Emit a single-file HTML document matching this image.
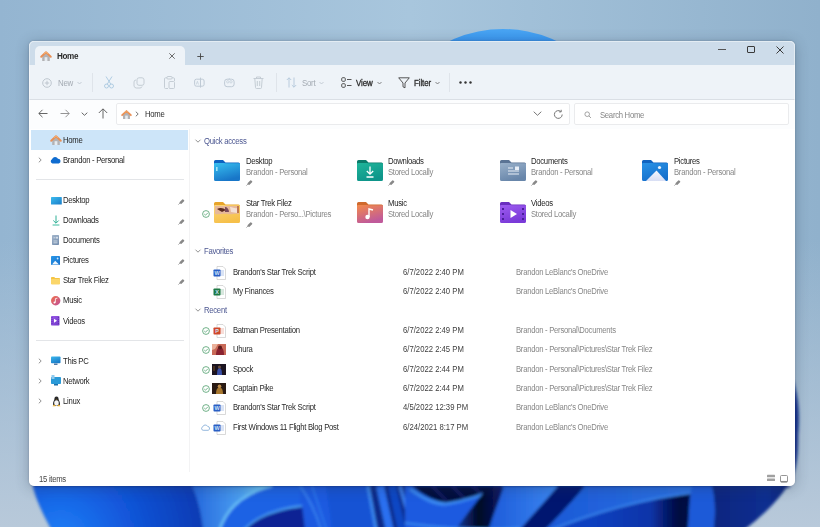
<!DOCTYPE html>
<html><head><meta charset="utf-8">
<style>
*{margin:0;padding:0;box-sizing:border-box}
html,body{width:820px;height:527px;overflow:hidden}
body{position:relative;font-family:"Liberation Sans",sans-serif;background:#97b4cf}
.a{position:absolute}
svg.a{overflow:visible}
.t{position:absolute;font-size:8.4px;letter-spacing:-0.3px;transform:scaleX(0.92);transform-origin:0 0;margin-top:-0.7px;color:#1f1f1f;white-space:nowrap;line-height:10px;height:10px}
.g{color:#878787}
.hd{color:#4b5690}
.d{letter-spacing:0}
.win{position:absolute;left:29px;top:41px;width:766px;height:445px;border-radius:5px;overflow:hidden;background:#fff;box-shadow:0 2px 14px rgba(40,55,75,.32), 0 0 2px rgba(40,50,65,.3)}
</style></head><body>
<!-- background -->
<svg class="a" style="left:0;top:0" width="820" height="527" viewBox="0 0 820 527">
<defs>
<linearGradient id="bg" x1="0" y1="0" x2="1" y2="0">
<stop offset="0" stop-color="#94b5d1"/><stop offset="0.5" stop-color="#a8c6dd"/><stop offset="1" stop-color="#90b1cc"/>
</linearGradient>
<linearGradient id="bgb" x1="0" y1="0" x2="0" y2="1">
<stop offset="0" stop-color="#b8c9da" stop-opacity="0"/><stop offset="1" stop-color="#b8c9da" stop-opacity="1"/>
</linearGradient>
<linearGradient id="arc" x1="0" y1="0" x2="0" y2="1">
<stop offset="0" stop-color="#4aa6f4"/><stop offset="0.08" stop-color="#2f8cee"/><stop offset="1" stop-color="#1a5fd8"/>
</linearGradient>
<linearGradient id="bl" x1="0" y1="0" x2="1" y2="0">
<stop offset="0" stop-color="#1a6ae8"/><stop offset="0.15" stop-color="#1050d0"/><stop offset="0.35" stop-color="#1d66e8"/><stop offset="0.5" stop-color="#0e48c8"/><stop offset="0.75" stop-color="#1554d8"/><stop offset="1" stop-color="#0a2a8a"/>
</linearGradient>
<filter id="bl1" x="-10%" y="-10%" width="120%" height="120%"><feGaussianBlur stdDeviation="1.5"/></filter>
</defs>
<rect width="820" height="527" fill="url(#bg)"/>
<rect y="240" width="820" height="287" fill="url(#bgb)"/>
<circle cx="503" cy="156" r="127" fill="url(#arc)"/>
<g filter="url(#bl1)">
<defs>
<radialGradient id="bA" cx="60" cy="540" r="150" gradientUnits="userSpaceOnUse"><stop offset="0" stop-color="#1f80f8"/><stop offset="0.45" stop-color="#1258dc"/><stop offset="1" stop-color="#0a38b0"/></radialGradient>
<linearGradient id="rib" x1="192" y1="0" x2="262" y2="0" gradientUnits="userSpaceOnUse"><stop offset="0" stop-color="#2466dc"/><stop offset="0.7" stop-color="#4a9ef0"/><stop offset="1" stop-color="#6cc4f6"/></linearGradient>
<linearGradient id="dk1" x1="470" y1="0" x2="560" y2="0" gradientUnits="userSpaceOnUse"><stop offset="0" stop-color="#0c3ab0"/><stop offset="0.5" stop-color="#020626"/><stop offset="1" stop-color="#061a80"/></linearGradient>
<linearGradient id="dk2" x1="590" y1="0" x2="700" y2="0" gradientUnits="userSpaceOnUse"><stop offset="0" stop-color="#0c40c0"/><stop offset="0.55" stop-color="#0a34a8"/><stop offset="0.8" stop-color="#020840"/><stop offset="1" stop-color="#030a48"/></linearGradient>
<linearGradient id="nv" x1="715" y1="0" x2="800" y2="0" gradientUnits="userSpaceOnUse"><stop offset="0" stop-color="#0a2680"/><stop offset="0.6" stop-color="#0c2e90"/><stop offset="1" stop-color="#0a2270"/></linearGradient>
</defs>
<path d="M33 440 L33 486 C36 500 44 516 57 540 L730 540 C752 525 775 505 789 483 C796 472 798 460 798 435 C800 412 798 396 793 380 L40 380 Z" fill="#0a2a8a"/>
<path d="M33 486 C36 500 44 516 57 540 L204 540 C202 515 198 500 192 486 Z" fill="url(#bA)"/>
<path d="M192 486 C198 500 202 515 204 540 L300 540 L300 486 Z" fill="url(#rib)"/>
<path d="M272 486 C240 494 222 512 217 540 L330 540 L330 486 Z" fill="#1e62e4"/>
<path d="M272 486 C240 494 222 512 217 540" fill="none" stroke="#6cc4f8" stroke-width="2.2"/>
<path d="M300 486 L326 486 L338 540 L300 540 Z" fill="#1a5ae0"/>
<path d="M238 540 C245 522 268 510 302 506 C304 520 305 530 306 540 Z" fill="#0a2494"/>
<path d="M238 540 C245 522 268 510 302 506" fill="none" stroke="#4aa0f4" stroke-width="1.8"/>
<path d="M300 486 C310 500 318 515 324 540" fill="none" stroke="#3a86f0" stroke-width="1.6"/>
<path d="M312 486 L330 540" stroke="#2f7cee" stroke-width="1.4"/>
<path d="M326 486 L368 486 L378 540 L334 540 Z" fill="#1452d4"/>
<path d="M368 486 L378 540" stroke="#3a88f0" stroke-width="3"/>
<path d="M380 486 L392 540" stroke="#2a70f0" stroke-width="8"/>
<path d="M392 486 L404 540" stroke="#1146c4" stroke-width="8"/>
<path d="M400 486 C405 505 410 520 415 540" stroke="#3a80f0" stroke-width="3" fill="none"/>
<path d="M406 486 L420 486 L420 540 L414 540 Z" fill="#1a5ae0"/>
<path d="M405 486 L700 486 L700 540 L405 540 Z" fill="#1a5ae0"/>
<path d="M412 486 L502 486 C485 494 462 502 445 503 C432 500 420 493 412 486 Z" fill="#030a3c"/>
<path d="M432 486 L447 501 M452 486 L466 500 M472 486 L484 496" stroke="#1a2a80" stroke-width="2" opacity="0.7"/>
<path d="M410 489 C424 499 434 504 446 504 C466 501 486 494 504 486" fill="none" stroke="#3a8af2" stroke-width="3"/>
<defs><linearGradient id="fold" x1="0" y1="0" x2="1" y2="0"><stop offset="0" stop-color="#1a50d0"/><stop offset="0.55" stop-color="#020622"/><stop offset="1" stop-color="#0a1a70"/></linearGradient>
<linearGradient id="pet" x1="540" y1="0" x2="700" y2="0" gradientUnits="userSpaceOnUse"><stop offset="0" stop-color="#1a58d6"/><stop offset="1" stop-color="#2c72e2"/></linearGradient><linearGradient id="lb" x1="0" y1="0" x2="1" y2="0"><stop offset="0" stop-color="#1c58d8"/><stop offset="1" stop-color="#3a86f0"/></linearGradient></defs>
<path d="M448 540 C462 520 478 500 488 486 L504 486 C500 500 490 522 486 540 Z" fill="url(#fold)"/>
<path d="M486 540 C490 522 500 500 504 486 L558 486 C545 502 525 522 512 540 Z" fill="url(#lb)"/>
<path d="M405 523 C440 528 480 531 520 528" fill="none" stroke="#3a8af0" stroke-width="2"/>
<path d="M558 486 L585 486 C570 505 550 525 535 540 L512 540 C525 522 545 502 558 486 Z" fill="#061470"/>
<path d="M585 486 L700 486 L700 492 C650 497 590 512 530 540 L535 540 C550 525 570 505 585 486 Z" fill="url(#pet)"/>
<path d="M528 540 C590 512 650 497 700 492 L700 540 Z" fill="url(#dk2)"/>
<path d="M532 538 C590 512 650 497 700 492" fill="none" stroke="#3a86ee" stroke-width="1.8"/>
<path d="M686 540 C690 520 688 500 692 486 L712 486 C716 500 716 520 712 540 Z" fill="#1c5ad8"/>
<path d="M684 486 C688 492 690 495 692 486 Z" fill="#2a70e0"/>
<path d="M712 486 L791 486 C789 488 787 488 786 488 C775 505 752 525 730 540 L712 540 C716 520 716 500 712 486 Z" fill="url(#nv)"/>

</g>
<!-- window shadow halo -->
</svg>

<div class="win">
 <!-- title bar -->
 <div class="a" style="left:0;top:0;width:766px;height:24px;background:#cddcea"></div>
 <div class="a" style="left:6px;top:5px;width:150px;height:19px;background:#eef3f8;border-radius:5px 5px 0 0"></div>
 <!-- toolbar -->
 <div class="a" style="left:0;top:24px;width:766px;height:35px;background:#eef3f8;border-bottom:1px solid #dadfe5"></div>
 <!-- address row -->
 <div class="a" style="left:0;top:59px;width:766px;height:29px;background:#fcfdfe"></div>
 <div class="a" style="left:87px;top:62px;width:454px;height:22px;background:#fff;border:1px solid #eaebed;border-radius:2px"></div>
 <div class="a" style="left:545px;top:62px;width:215px;height:22px;background:#fff;border:1px solid #eaebed;border-radius:2px"></div>
 <!-- sidebar -->
 <div class="a" style="left:160px;top:88px;width:1px;height:343px;background:#f3f3f4"></div>
 <div class="a" style="left:2px;top:89px;width:157px;height:20px;background:#cde5f9"></div>
 <div class="a" style="left:7px;top:138px;width:148px;height:1px;background:#e3e5e8"></div>
 <div class="a" style="left:7px;top:299px;width:148px;height:1px;background:#e3e5e8"></div>
</div>

<div class="a" style="left:29px;top:41px;width:766px;height:445px;border-radius:5px;border:1px solid rgba(255,255,255,0.45)"></div>
<!-- ===== title bar content ===== -->
<svg class="a" style="left:40px;top:50px" width="12" height="12" viewBox="0 0 12 12">
 <path d="M2.2 6.2 L6 2.8 L9.8 6.2 V11 H2.2 Z" fill="#b2b2b5"/><rect x="4.6" y="7.2" width="2.8" height="3.8" fill="#e6ebf0"/>
 <path d="M1.2 6.8 L6 2.2 L10.8 6.8" fill="none" stroke="#e98f55" stroke-width="1.9" stroke-linejoin="round" stroke-linecap="round"/><path d="M4 3.8 L6 2.2 L8 3.8" fill="none" stroke="#f4b070" stroke-width="1"/>
</svg>
<div class="t" style="left:56.5px;top:51.8px;font-weight:bold;color:#2a2a2a;font-size:8.8px;letter-spacing:-0.4px">Home</div>
<svg class="a" style="left:169px;top:53px" width="6" height="6" viewBox="0 0 6 6"><path d="M0.3 0.3 L5.7 5.7 M5.7 0.3 L0.3 5.7" stroke="#555" stroke-width="0.85"/></svg>
<svg class="a" style="left:197px;top:52.7px" width="7" height="7" viewBox="0 0 7 7"><path d="M3.5 0.3 V6.7 M0.3 3.5 H6.7" stroke="#444" stroke-width="0.9"/></svg>
<div class="a" style="left:718px;top:49px;width:8px;height:1px;background:#555"></div>
<div class="a" style="left:747px;top:46px;width:8px;height:7px;border:1px solid #3a3a3a;border-radius:1px"></div>
<svg class="a" style="left:776px;top:46px" width="8" height="8" viewBox="0 0 8 8"><path d="M0.5 0.5 L7.5 7.5 M7.5 0.5 L0.5 7.5" stroke="#3a3a3a" stroke-width="1"/></svg>

<!-- ===== toolbar ===== -->
<svg class="a" style="left:42px;top:78px" width="10" height="10" viewBox="0 0 10 10"><circle cx="5" cy="5" r="4.3" fill="none" stroke="#b9c2cb" stroke-width="0.9"/><path d="M5 2.8 V7.2 M2.8 5 H7.2" stroke="#b9c2cb" stroke-width="0.9"/></svg>
<div class="t" style="left:58px;top:78.5px;color:#a4abb3;font-size:8.6px">New</div>
<svg class="a" style="left:77px;top:81px" width="5" height="4" viewBox="0 0 5 4"><path d="M0.5 1 L2.5 3 L4.5 1" fill="none" stroke="#b9c2cb" stroke-width="0.8"/></svg>
<div class="a" style="left:92px;top:73px;width:1px;height:19px;background:#dfe4ea"></div>
<!-- cut -->
<svg class="a" style="left:103px;top:76px" width="12" height="13" viewBox="0 0 12 13"><path d="M3 0.5 L8 8.5 M9 0.5 L4 8.5" stroke="#a9c8e0" stroke-width="0.9" fill="none"/><circle cx="3.5" cy="10" r="2" fill="none" stroke="#a9c8e0" stroke-width="0.9"/><circle cx="8.5" cy="10" r="2" fill="none" stroke="#a9c8e0" stroke-width="0.9"/></svg>
<!-- copy -->
<svg class="a" style="left:133px;top:77px" width="12" height="12" viewBox="0 0 12 12"><rect x="4" y="0.8" width="7" height="7.5" rx="2" fill="none" stroke="#c0c8d0" stroke-width="0.9"/><path d="M3 3 A2 2 0 0 0 1 5 V9 A2.5 2.5 0 0 0 3.5 11 H7 A2 2 0 0 0 9 9.5" fill="none" stroke="#c0c8d0" stroke-width="0.9"/></svg>
<!-- paste -->
<svg class="a" style="left:164px;top:76px" width="11" height="13" viewBox="0 0 11 13"><path d="M3 1.8 H1.5 A1 1 0 0 0 0.5 2.8 V11.5 A1 1 0 0 0 1.5 12.5 H4 M8 1.8 H9.5 A1 1 0 0 1 10.5 2.8 V5" fill="none" stroke="#c0c8d0" stroke-width="0.9"/><rect x="3" y="0.5" width="5" height="2.5" rx="0.8" fill="none" stroke="#c0c8d0" stroke-width="0.9"/><rect x="5" y="5.5" width="5.5" height="7" rx="1" fill="none" stroke="#c0c8d0" stroke-width="0.9"/></svg>
<!-- rename -->
<svg class="a" style="left:194px;top:77px" width="11" height="11" viewBox="0 0 11 11"><rect x="0.6" y="2.2" width="9.5" height="7" rx="1.8" fill="none" stroke="#bfcad5" stroke-width="1"/><path d="M6.5 0.6 V10.6" stroke="#bfcad5" stroke-width="1"/><path d="M2.3 7.5 L3.4 4.3 L4.5 7.5" stroke="#c5d0da" stroke-width="0.8" fill="none"/></svg>
<!-- share -->
<svg class="a" style="left:224px;top:77px" width="11" height="11" viewBox="0 0 11 11"><rect x="0.6" y="2.2" width="9.5" height="7.5" rx="2.5" fill="none" stroke="#bfcad5" stroke-width="1"/><circle cx="3.8" cy="4.8" r="1.2" fill="none" stroke="#c5d0da" stroke-width="0.8"/><circle cx="7" cy="4.8" r="1.2" fill="none" stroke="#c5d0da" stroke-width="0.8"/><path d="M5.3 1 V3" stroke="#c5d0da" stroke-width="0.8"/></svg>
<!-- delete -->
<svg class="a" style="left:253px;top:76px" width="11" height="13" viewBox="0 0 11 13"><path d="M0.5 2.5 H10.5 M3.5 2.5 V1 H7.5 V2.5 M1.8 2.5 L2.5 11.5 A1 1 0 0 0 3.5 12.5 H7.5 A1 1 0 0 0 8.5 11.5 L9.2 2.5 M4.3 5 V10 M6.7 5 V10" fill="none" stroke="#c0c8d0" stroke-width="0.9"/></svg>
<div class="a" style="left:276px;top:73px;width:1px;height:19px;background:#dfe4ea"></div>
<!-- sort -->
<svg class="a" style="left:286px;top:77px" width="11" height="11" viewBox="0 0 11 11"><path d="M3 10.5 V0.8 M0.8 3 L3 0.8 L5.2 3 M8 0.5 V10.2 M5.8 8 L8 10.2 L10.2 8" fill="none" stroke="#b2c7da" stroke-width="0.9"/></svg>
<div class="t" style="left:302px;top:78.5px;color:#a4abb3;font-size:8.6px">Sort</div>
<svg class="a" style="left:319px;top:81px" width="5" height="4" viewBox="0 0 5 4"><path d="M0.5 1 L2.5 3 L4.5 1" fill="none" stroke="#b9c2cb" stroke-width="0.8"/></svg>
<!-- view -->
<svg class="a" style="left:341px;top:77px" width="11" height="11" viewBox="0 0 11 11"><rect x="0.7" y="0.7" width="3.6" height="3.6" rx="1" fill="none" stroke="#444" stroke-width="0.9"/><rect x="0.7" y="6.7" width="3.6" height="3.6" rx="1" fill="none" stroke="#444" stroke-width="0.9"/><path d="M6 2.5 H10.5 M6 8.5 H10.5" stroke="#444" stroke-width="0.9"/></svg>
<div class="t" style="left:356px;top:78.5px;color:#2b2b2b;font-size:8.6px;-webkit-text-stroke:0.3px #2b2b2b;letter-spacing:-0.1px">View</div>
<svg class="a" style="left:377px;top:81px" width="5" height="4" viewBox="0 0 5 4"><path d="M0.5 1 L2.5 3 L4.5 1" fill="none" stroke="#666" stroke-width="0.8"/></svg>
<!-- filter -->
<svg class="a" style="left:398px;top:77px" width="12" height="12" viewBox="0 0 12 12"><path d="M0.7 0.8 H11.3 L7 6 V10.8 L5 9.8 V6 Z" fill="none" stroke="#444" stroke-width="0.9" stroke-linejoin="round"/></svg>
<div class="t" style="left:414px;top:78.5px;color:#2b2b2b;font-size:8.6px;-webkit-text-stroke:0.3px #2b2b2b;letter-spacing:-0.1px">Filter</div>
<svg class="a" style="left:435px;top:81px" width="5" height="4" viewBox="0 0 5 4"><path d="M0.5 1 L2.5 3 L4.5 1" fill="none" stroke="#666" stroke-width="0.8"/></svg>
<div class="a" style="left:449px;top:73px;width:1px;height:19px;background:#dfe4ea"></div>
<svg class="a" style="left:459px;top:81px" width="13" height="3" viewBox="0 0 13 3"><circle cx="1.5" cy="1.5" r="1.2" fill="#333"/><circle cx="6.5" cy="1.5" r="1.2" fill="#333"/><circle cx="11.5" cy="1.5" r="1.2" fill="#333"/></svg>

<!-- ===== address row ===== -->
<svg class="a" style="left:38px;top:109px" width="10" height="9" viewBox="0 0 10 9"><path d="M9.5 4.5 H1 M4.5 0.8 L0.8 4.5 L4.5 8.2" fill="none" stroke="#555" stroke-width="0.9"/></svg>
<svg class="a" style="left:60px;top:109px" width="10" height="9" viewBox="0 0 10 9"><path d="M0.5 4.5 H9 M5.5 0.8 L9.2 4.5 L5.5 8.2" fill="none" stroke="#888" stroke-width="0.9"/></svg>
<svg class="a" style="left:81px;top:112px" width="7" height="4" viewBox="0 0 7 4"><path d="M0.7 0.7 L3.5 3.3 L6.3 0.7" fill="none" stroke="#555" stroke-width="0.9"/></svg>
<svg class="a" style="left:98px;top:108px" width="10" height="11" viewBox="0 0 10 11"><path d="M5 10.5 V1 M0.8 5 L5 0.8 L9.2 5" fill="none" stroke="#555" stroke-width="0.9"/></svg>
<svg class="a" style="left:120.5px;top:108.5px" width="11" height="11" viewBox="0 0 12 12">
 <path d="M2.2 6.2 L6 2.8 L9.8 6.2 V11 H2.2 Z" fill="#b2b2b5"/><rect x="4.6" y="7.2" width="2.8" height="3.8" fill="#e6ebf0"/>
 <path d="M1.2 6.8 L6 2.2 L10.8 6.8" fill="none" stroke="#e98f55" stroke-width="1.9" stroke-linejoin="round" stroke-linecap="round"/><path d="M4 3.8 L6 2.2 L8 3.8" fill="none" stroke="#f4b070" stroke-width="1"/>
</svg>
<svg class="a" style="left:135px;top:111px" width="4" height="6" viewBox="0 0 4 6"><path d="M0.8 0.7 L3.2 3 L0.8 5.3" fill="none" stroke="#555" stroke-width="0.8"/></svg>
<div class="t" style="left:145px;top:110px;color:#2b2b2b">Home</div>
<svg class="a" style="left:533px;top:111px" width="9" height="5" viewBox="0 0 9 5"><path d="M0.7 0.7 L4.5 4.3 L8.3 0.7" fill="none" stroke="#666" stroke-width="0.9"/></svg>
<svg class="a" style="left:553px;top:108.5px" width="11" height="11" viewBox="0 0 11 11"><path d="M9.2 5.5 A3.9 3.9 0 1 1 7.8 2.5" fill="none" stroke="#777" stroke-width="1"/><path d="M8.2 0.8 V2.9 H6.1" fill="none" stroke="#777" stroke-width="1"/></svg>
<svg class="a" style="left:584px;top:110.5px" width="8" height="8" viewBox="0 0 8 8"><circle cx="3.2" cy="3.2" r="2.3" fill="none" stroke="#999" stroke-width="0.9"/><path d="M4.9 4.9 L7 7" stroke="#999" stroke-width="0.9"/></svg>
<div class="t" style="left:600px;top:110.6px;color:#858585">Search Home</div>

<!-- ===== sidebar ===== -->
<svg class="a" style="left:50px;top:134px" width="12" height="12" viewBox="0 0 12 12">
 <path d="M2.2 6.2 L6 2.8 L9.8 6.2 V11 H2.2 Z" fill="#b2b2b5"/><rect x="4.6" y="7.2" width="2.8" height="3.8" fill="#e6ebf0"/>
 <path d="M1.2 6.8 L6 2.2 L10.8 6.8" fill="none" stroke="#e98f55" stroke-width="1.9" stroke-linejoin="round" stroke-linecap="round"/><path d="M4 3.8 L6 2.2 L8 3.8" fill="none" stroke="#f4b070" stroke-width="1"/>
</svg>
<div class="t" style="left:63px;top:136px">Home</div>
<svg class="a" style="left:38px;top:157px" width="4" height="6" viewBox="0 0 4 6"><path d="M0.8 0.7 L3.2 3 L0.8 5.3" fill="none" stroke="#777" stroke-width="0.8"/></svg>
<svg class="a" style="left:50px;top:156px" width="11" height="8" viewBox="0 0 11 8"><path d="M2.5 7.5 A2.3 2.3 0 0 1 2 3.2 A3.2 3.2 0 0 1 8 2.8 A2.4 2.4 0 0 1 8.8 7.5 Z" fill="#0f6cd0"/></svg>
<div class="t" style="left:63px;top:156px">Brandon - Personal</div>

<svg class="a" style="left:50.5px;top:196.5px" width="11" height="8" viewBox="0 0 11 8"><defs><linearGradient id="sd" x1="0" y1="0" x2="1" y2="1"><stop offset="0" stop-color="#3cbcef"/><stop offset="1" stop-color="#1a7cc8"/></linearGradient></defs><rect x="0" y="0" width="10.8" height="7.6" rx="0.6" fill="url(#sd)"/></svg>
<div class="t" style="left:63px;top:196px">Desktop</div>
<svg class="a" style="left:52px;top:215px" width="8" height="11" viewBox="0 0 8 11"><path d="M4 0.5 V8 M1.3 5.5 L4 8.2 L6.7 5.5" fill="none" stroke="#2fb096" stroke-width="1"/><path d="M0.6 10 H7.4" stroke="#3cbca0" stroke-width="1"/></svg>
<div class="t" style="left:63px;top:216px">Downloads</div>
<svg class="a" style="left:52px;top:235.3px" width="7" height="10" viewBox="0 0 7 10"><defs><linearGradient id="sdoc" x1="0" y1="0" x2="0.6" y2="1"><stop offset="0" stop-color="#a3b6cc"/><stop offset="1" stop-color="#7891b0"/></linearGradient></defs><rect width="7" height="10" rx="0.7" fill="url(#sdoc)"/><path d="M1.5 2.8 H3.5 M1.5 6 H5.5 M1.5 7.8 H5.5" stroke="#dbe4ee" stroke-width="0.8"/><rect x="4.2" y="1.8" width="1.6" height="1.8" fill="#e4ebf3"/></svg>
<div class="t" style="left:63px;top:236px">Documents</div>
<svg class="a" style="left:51.2px;top:256.2px" width="9" height="9" viewBox="0 0 9 9"><defs><linearGradient id="spic" x1="0" y1="0" x2="1" y2="1"><stop offset="0" stop-color="#2a98e8"/><stop offset="1" stop-color="#1670cc"/></linearGradient></defs><rect width="9" height="9" rx="0.8" fill="url(#spic)"/><path d="M1 8.6 L4.2 4.8 L8 8.6 Z" fill="#eef6fd"/><circle cx="6.6" cy="2.5" r="0.9" fill="#cfe8fa"/></svg>
<div class="t" style="left:63px;top:256px">Pictures</div>
<svg class="a" style="left:51.2px;top:276.8px" width="9" height="7.2" viewBox="0 0 9 7.2"><path d="M0 0.8 A0.8 0.8 0 0 1 0.8 0 H3.3 L4.1 1 H8.2 A0.8 0.8 0 0 1 9 1.8 V6.4 A0.8 0.8 0 0 1 8.2 7.2 H0.8 A0.8 0.8 0 0 1 0 6.4 Z" fill="#f5c443"/><rect x="0" y="2" width="9" height="5.2" rx="0.7" fill="#fbd66a"/></svg>
<div class="t" style="left:63px;top:276px">Star Trek Filez</div>
<svg class="a" style="left:51px;top:296px" width="9.4" height="9.4" viewBox="0 0 9.4 9.4"><defs><linearGradient id="sm" x1="0" y1="0" x2="1" y2="1"><stop offset="0" stop-color="#f0704a"/><stop offset="1" stop-color="#c0509a"/></linearGradient></defs><circle cx="4.7" cy="4.7" r="4.7" fill="url(#sm)"/><path d="M4.4 6.6 V2.6 L6.4 2.2" fill="none" stroke="#fff" stroke-width="0.8"/><circle cx="3.5" cy="6.6" r="1" fill="#fff"/></svg>
<div class="t" style="left:63px;top:296px">Music</div>
<svg class="a" style="left:51.4px;top:315.6px" width="8.5" height="9.6" viewBox="0 0 8.5 9.6"><defs><linearGradient id="svid" x1="0" y1="0" x2="1" y2="1"><stop offset="0" stop-color="#9a5ae8"/><stop offset="1" stop-color="#7038c8"/></linearGradient></defs><rect width="8.5" height="9.6" rx="0.8" fill="url(#svid)"/><path d="M3 2.8 L6 4.8 L3 6.8 Z" fill="#fff"/><path d="M1 1 V8.6 M7.5 1 V8.6" stroke="#5a2aa8" stroke-width="0.8" stroke-dasharray="1 1"/></svg>
<div class="t" style="left:63px;top:317px">Videos</div>

<svg class="a" style="left:38px;top:358px" width="4" height="6" viewBox="0 0 4 6"><path d="M0.8 0.7 L3.2 3 L0.8 5.3" fill="none" stroke="#777" stroke-width="0.8"/></svg>
<svg class="a" style="left:51px;top:356px" width="10" height="10" viewBox="0 0 10 10"><defs><linearGradient id="spc" x1="0" y1="0" x2="0.5" y2="1"><stop offset="0" stop-color="#3cb8ee"/><stop offset="1" stop-color="#1a7cc8"/></linearGradient></defs><rect y="0.5" width="9.5" height="6.8" rx="0.8" fill="url(#spc)"/><rect x="3" y="7.6" width="3.5" height="1.2" fill="#2a5a90"/></svg>
<div class="t" style="left:63px;top:357px">This PC</div>
<svg class="a" style="left:38px;top:378px" width="4" height="6" viewBox="0 0 4 6"><path d="M0.8 0.7 L3.2 3 L0.8 5.3" fill="none" stroke="#777" stroke-width="0.8"/></svg>
<svg class="a" style="left:51px;top:375px" width="10" height="11" viewBox="0 0 10 11"><rect x="0" y="2" width="10" height="7" rx="0.8" fill="#2a9ad8"/><rect x="0.5" y="0" width="3" height="4" fill="#8fcaee"/><rect x="3" y="9" width="4" height="1.5" fill="#1c6fa8"/></svg>
<div class="t" style="left:63px;top:377px">Network</div>
<svg class="a" style="left:38px;top:398px" width="4" height="6" viewBox="0 0 4 6"><path d="M0.8 0.7 L3.2 3 L0.8 5.3" fill="none" stroke="#777" stroke-width="0.8"/></svg>
<svg class="a" style="left:51.5px;top:395.5px" width="9" height="10.5" viewBox="0 0 10 12"><path d="M5 0.5 C3.2 0.5 2.6 2 2.6 3.5 C2.6 5 1 6.5 1 9 C1 10.5 2.5 11.5 5 11.5 C7.5 11.5 9 10.5 9 9 C9 6.5 7.4 5 7.4 3.5 C7.4 2 6.8 0.5 5 0.5 Z" fill="#2a2a2a"/><ellipse cx="5" cy="8" rx="2.6" ry="3.2" fill="#f6f6f6"/><path d="M0.3 11.6 L2.8 9.8 L4 11.8 Z M9.7 11.6 L7.2 9.8 L6 11.8 Z" fill="#f0b020"/><path d="M4.2 3.6 L5 4.4 L5.8 3.6 Z" fill="#f0b020"/></svg>
<div class="t" style="left:63px;top:397px">Linux</div>
<!-- pins -->
<svg class="a" style="left:178px;top:197.7px" width="7" height="7" viewBox="0 0 7 7"><path d="M0.4 6.6 L2.4 4.6" stroke="#909090" stroke-width="0.8"/><rect x="1.4" y="2.3" width="5" height="2.6" rx="0.7" fill="#888" transform="rotate(-45 3.9 3.6)"/></svg>
<svg class="a" style="left:178px;top:217.7px" width="7" height="7" viewBox="0 0 7 7"><path d="M0.4 6.6 L2.4 4.6" stroke="#909090" stroke-width="0.8"/><rect x="1.4" y="2.3" width="5" height="2.6" rx="0.7" fill="#888" transform="rotate(-45 3.9 3.6)"/></svg>
<svg class="a" style="left:178px;top:237.7px" width="7" height="7" viewBox="0 0 7 7"><path d="M0.4 6.6 L2.4 4.6" stroke="#909090" stroke-width="0.8"/><rect x="1.4" y="2.3" width="5" height="2.6" rx="0.7" fill="#888" transform="rotate(-45 3.9 3.6)"/></svg>
<svg class="a" style="left:178px;top:257.7px" width="7" height="7" viewBox="0 0 7 7"><path d="M0.4 6.6 L2.4 4.6" stroke="#909090" stroke-width="0.8"/><rect x="1.4" y="2.3" width="5" height="2.6" rx="0.7" fill="#888" transform="rotate(-45 3.9 3.6)"/></svg>
<svg class="a" style="left:178px;top:277.7px" width="7" height="7" viewBox="0 0 7 7"><path d="M0.4 6.6 L2.4 4.6" stroke="#909090" stroke-width="0.8"/><rect x="1.4" y="2.3" width="5" height="2.6" rx="0.7" fill="#888" transform="rotate(-45 3.9 3.6)"/></svg>

<!-- ===== content ===== -->
<svg class="a" style="left:195px;top:139px" width="6" height="4" viewBox="0 0 6 4"><path d="M0.5 0.7 L3 3.2 L5.5 0.7" fill="none" stroke="#777" stroke-width="0.8"/></svg>
<div class="t hd" style="left:204px;top:136.8px">Quick access</div>
<svg class="a" style="left:195px;top:249px" width="6" height="4" viewBox="0 0 6 4"><path d="M0.5 0.7 L3 3.2 L5.5 0.7" fill="none" stroke="#777" stroke-width="0.8"/></svg>
<div class="t hd" style="left:204px;top:246.5px">Favorites</div>
<svg class="a" style="left:195px;top:308px" width="6" height="4" viewBox="0 0 6 4"><path d="M0.5 0.7 L3 3.2 L5.5 0.7" fill="none" stroke="#777" stroke-width="0.8"/></svg>
<div class="t hd" style="left:204px;top:305.5px">Recent</div>
<svg class="a" style="left:214px;top:160px" width="26" height="21" viewBox="0 0 26 21"><defs><linearGradient id="fq1" x1="0" y1="0" x2="0.4" y2="1"><stop offset="0" stop-color="#38c0f0"/><stop offset="1" stop-color="#1876c8"/></linearGradient></defs><path d="M0 1.5 A1.5 1.5 0 0 1 1.5 0 H9 L11.5 2.5 H24.5 A1.5 1.5 0 0 1 26 4 V10 H0 Z" fill="#0d62c0"/><path d="M0 4 A1 1 0 0 1 1 3 H10 L11.5 3.2 H25 A1 1 0 0 1 26 4.2 V19.5 A1.5 1.5 0 0 1 24.5 21 H1.5 A1.5 1.5 0 0 1 0 19.5 Z" fill="url(#fq1)"/><rect x="2" y="7" width="1.6" height="4" fill="#9fe4f8"/></svg>
<svg class="a" style="left:357px;top:160px" width="26" height="21" viewBox="0 0 26 21"><defs><linearGradient id="fq2" x1="0" y1="0" x2="0.4" y2="1"><stop offset="0" stop-color="#1fb59a"/><stop offset="1" stop-color="#0e958a"/></linearGradient></defs><path d="M0 1.5 A1.5 1.5 0 0 1 1.5 0 H9 L11.5 2.5 H24.5 A1.5 1.5 0 0 1 26 4 V10 H0 Z" fill="#0b7a6a"/><path d="M0 4 A1 1 0 0 1 1 3 H10 L11.5 3.2 H25 A1 1 0 0 1 26 4.2 V19.5 A1.5 1.5 0 0 1 24.5 21 H1.5 A1.5 1.5 0 0 1 0 19.5 Z" fill="url(#fq2)"/><path d="M13 6.5 V14 M9.8 11 L13 14.2 L16.2 11 M9.5 17 H16.5" fill="none" stroke="#fff" stroke-width="1.3"/></svg>
<svg class="a" style="left:500px;top:160px" width="26" height="21" viewBox="0 0 26 21"><defs><linearGradient id="fq3" x1="0" y1="0" x2="0.4" y2="1"><stop offset="0" stop-color="#9ab1ca"/><stop offset="1" stop-color="#6886aa"/></linearGradient></defs><path d="M0 1.5 A1.5 1.5 0 0 1 1.5 0 H9 L11.5 2.5 H24.5 A1.5 1.5 0 0 1 26 4 V10 H0 Z" fill="#5a7394"/><path d="M0 4 A1 1 0 0 1 1 3 H10 L11.5 3.2 H25 A1 1 0 0 1 26 4.2 V19.5 A1.5 1.5 0 0 1 24.5 21 H1.5 A1.5 1.5 0 0 1 0 19.5 Z" fill="url(#fq3)"/><path d="M8 8 H13 M8 11 H19 M8 14 H19" stroke="#e8eef6" stroke-width="1.2"/><rect x="15" y="6.5" width="4" height="3.5" fill="#e8eef6"/></svg>
<svg class="a" style="left:642px;top:160px" width="26" height="21" viewBox="0 0 26 21"><defs><linearGradient id="fq4" x1="0" y1="0" x2="0.4" y2="1"><stop offset="0" stop-color="#2892e6"/><stop offset="1" stop-color="#1670cc"/></linearGradient></defs><path d="M0 1.5 A1.5 1.5 0 0 1 1.5 0 H9 L11.5 2.5 H24.5 A1.5 1.5 0 0 1 26 4 V10 H0 Z" fill="#0f63c0"/><path d="M0 4 A1 1 0 0 1 1 3 H10 L11.5 3.2 H25 A1 1 0 0 1 26 4.2 V19.5 A1.5 1.5 0 0 1 24.5 21 H1.5 A1.5 1.5 0 0 1 0 19.5 Z" fill="url(#fq4)"/><defs><linearGradient id="mtn" x1="0" y1="0" x2="0" y2="1"><stop offset="0" stop-color="#f4f8fe"/><stop offset="1" stop-color="#d8def4"/></linearGradient></defs><path d="M4 21 L14.5 10.5 L24 21 Z" fill="url(#mtn)"/><circle cx="17.5" cy="7.5" r="1.6" fill="#eaf3fc"/></svg>
<svg class="a" style="left:214px;top:202px" width="26" height="21" viewBox="0 0 26 21"><defs><linearGradient id="fq5" x1="0" y1="0" x2="0.4" y2="1"><stop offset="0" stop-color="#fbd77a"/><stop offset="1" stop-color="#f6c04a"/></linearGradient></defs><path d="M0 1.5 A1.5 1.5 0 0 1 1.5 0 H9 L11.5 2.5 H24.5 A1.5 1.5 0 0 1 26 4 V10 H0 Z" fill="#e8a42a"/><path d="M0 4 A1 1 0 0 1 1 3 H10 L11.5 3.2 H25 A1 1 0 0 1 26 4.2 V19.5 A1.5 1.5 0 0 1 24.5 21 H1.5 A1.5 1.5 0 0 1 0 19.5 Z" fill="url(#fq5)"/><path d="M1 4 H25 V12 C20 11 18 13 14 12 C9 11 6 13 1 12 Z" fill="#e6b89a"/><path d="M3 7 C7 5 9 6 12 8 L8 10 Z" fill="#5a2a1e"/><path d="M11 5 C13 5 15 7 15 10 L11 10 Z" fill="#7a4a5a"/><path d="M16 5 C19 5 21 7 23 6 V11 L17 10 Z" fill="#f4e0d4"/><rect x="23" y="4" width="2" height="7" fill="#c07850"/></svg>
<svg class="a" style="left:357px;top:202px" width="26" height="21" viewBox="0 0 26 21"><defs><linearGradient id="fq6" x1="0" y1="0" x2="0.4" y2="1"><stop offset="0" stop-color="#f38a4a"/><stop offset="1" stop-color="#c05a9a"/></linearGradient></defs><path d="M0 1.5 A1.5 1.5 0 0 1 1.5 0 H9 L11.5 2.5 H24.5 A1.5 1.5 0 0 1 26 4 V10 H0 Z" fill="#cf6a2e"/><path d="M0 4 A1 1 0 0 1 1 3 H10 L11.5 3.2 H25 A1 1 0 0 1 26 4.2 V19.5 A1.5 1.5 0 0 1 24.5 21 H1.5 A1.5 1.5 0 0 1 0 19.5 Z" fill="url(#fq6)"/><path d="M12 15 V7 L16 8" fill="none" stroke="#fff" stroke-width="1.4"/><circle cx="10.5" cy="15" r="2.2" fill="#fff"/></svg>
<svg class="a" style="left:500px;top:202px" width="26" height="21" viewBox="0 0 26 21"><defs><linearGradient id="fq7" x1="0" y1="0" x2="0.4" y2="1"><stop offset="0" stop-color="#9d5cf0"/><stop offset="1" stop-color="#7a3ad8"/></linearGradient></defs><path d="M0 1.5 A1.5 1.5 0 0 1 1.5 0 H9 L11.5 2.5 H24.5 A1.5 1.5 0 0 1 26 4 V10 H0 Z" fill="#6a2fbf"/><path d="M0 4 A1 1 0 0 1 1 3 H10 L11.5 3.2 H25 A1 1 0 0 1 26 4.2 V19.5 A1.5 1.5 0 0 1 24.5 21 H1.5 A1.5 1.5 0 0 1 0 19.5 Z" fill="url(#fq7)"/><path d="M10.5 8 L17 12 L10.5 16 Z" fill="#fff"/><rect x="2" y="6" width="2" height="2" fill="#4a1e9a"/><rect x="2" y="11" width="2" height="2" fill="#4a1e9a"/><rect x="2" y="16" width="2" height="2" fill="#4a1e9a"/><rect x="22" y="6" width="2" height="2" fill="#4a1e9a"/><rect x="22" y="11" width="2" height="2" fill="#4a1e9a"/><rect x="22" y="16" width="2" height="2" fill="#4a1e9a"/></svg>
<div class="t" style="left:246px;top:157px">Desktop</div>
<div class="t g" style="left:246px;top:168px">Brandon - Personal</div>
<svg class="a" style="left:246px;top:178.7px" width="7" height="7" viewBox="0 0 7 7"><path d="M0.4 6.6 L2.4 4.6" stroke="#909090" stroke-width="0.8"/><rect x="1.4" y="2.3" width="5" height="2.6" rx="0.7" fill="#888" transform="rotate(-45 3.9 3.6)"/></svg>
<div class="t" style="left:388px;top:157px">Downloads</div>
<div class="t g" style="left:388px;top:168px">Stored Locally</div>
<svg class="a" style="left:388px;top:178.7px" width="7" height="7" viewBox="0 0 7 7"><path d="M0.4 6.6 L2.4 4.6" stroke="#909090" stroke-width="0.8"/><rect x="1.4" y="2.3" width="5" height="2.6" rx="0.7" fill="#888" transform="rotate(-45 3.9 3.6)"/></svg>
<div class="t" style="left:531px;top:157px">Documents</div>
<div class="t g" style="left:531px;top:168px">Brandon - Personal</div>
<svg class="a" style="left:531px;top:178.7px" width="7" height="7" viewBox="0 0 7 7"><path d="M0.4 6.6 L2.4 4.6" stroke="#909090" stroke-width="0.8"/><rect x="1.4" y="2.3" width="5" height="2.6" rx="0.7" fill="#888" transform="rotate(-45 3.9 3.6)"/></svg>
<div class="t" style="left:674px;top:157px">Pictures</div>
<div class="t g" style="left:674px;top:168px">Brandon - Personal</div>
<svg class="a" style="left:674px;top:178.7px" width="7" height="7" viewBox="0 0 7 7"><path d="M0.4 6.6 L2.4 4.6" stroke="#909090" stroke-width="0.8"/><rect x="1.4" y="2.3" width="5" height="2.6" rx="0.7" fill="#888" transform="rotate(-45 3.9 3.6)"/></svg>
<div class="t" style="left:246px;top:199px">Star Trek Filez</div>
<div class="t g" style="left:246px;top:210px">Brandon - Perso...\Pictures</div>
<svg class="a" style="left:246px;top:220.7px" width="7" height="7" viewBox="0 0 7 7"><path d="M0.4 6.6 L2.4 4.6" stroke="#909090" stroke-width="0.8"/><rect x="1.4" y="2.3" width="5" height="2.6" rx="0.7" fill="#888" transform="rotate(-45 3.9 3.6)"/></svg>
<div class="t" style="left:388px;top:199px">Music</div>
<div class="t g" style="left:388px;top:210px">Stored Locally</div>
<div class="t" style="left:531px;top:199px">Videos</div>
<div class="t g" style="left:531px;top:210px">Stored Locally</div>
<svg class="a" style="left:202px;top:209.5px" width="8" height="8" viewBox="0 0 8 8"><circle cx="4" cy="4" r="3.4" fill="none" stroke="#4f9e6c" stroke-width="0.8"/><path d="M2.3 4.1 L3.5 5.2 L5.8 2.9" fill="none" stroke="#4f9e6c" stroke-width="0.8"/></svg>
<svg class="a" style="left:213px;top:266px" width="13" height="14" viewBox="0 0 13 14"><path d="M4 0.5 H10 L12.5 3 V13.5 H4 Z" fill="#fff" stroke="#c8c8c8" stroke-width="0.7"/><path d="M6.5 5 H11 M6.5 7 H11 M6.5 9 H11" stroke="#2b5fc4" stroke-width="0.6" opacity="0.6"/><rect x="0.5" y="3.5" width="7" height="7" rx="0.8" fill="#2b5fc4"/><text x="4" y="9" font-family="Liberation Sans" font-size="5.5" font-weight="bold" fill="#cfe0f8" text-anchor="middle">W</text></svg>
<div class="t" style="left:233px;top:268px;color:#2a2a2a">Brandon's Star Trek Script</div>
<div class="t g d" style="left:403px;top:268px;color:#3e3e3e">6/7/2022 2:40 PM</div>
<div class="t g" style="left:516px;top:268px">Brandon LeBlanc's OneDrive</div>
<svg class="a" style="left:213px;top:285px" width="13" height="14" viewBox="0 0 13 14"><path d="M4 0.5 H10 L12.5 3 V13.5 H4 Z" fill="#fff" stroke="#c8c8c8" stroke-width="0.7"/><path d="M6.5 5 H11 M6.5 7 H11 M6.5 9 H11" stroke="#1f7a45" stroke-width="0.6" opacity="0.6"/><rect x="0.5" y="3.5" width="7" height="7" rx="0.8" fill="#1f7a45"/><text x="4" y="9" font-family="Liberation Sans" font-size="5.5" font-weight="bold" fill="#cfe0f8" text-anchor="middle">X</text></svg>
<div class="t" style="left:233px;top:287px;color:#2a2a2a">My Finances</div>
<div class="t g d" style="left:403px;top:287px;color:#3e3e3e">6/7/2022 2:40 PM</div>
<div class="t g" style="left:516px;top:287px">Brandon LeBlanc's OneDrive</div>
<svg class="a" style="left:213px;top:324px" width="13" height="14" viewBox="0 0 13 14"><path d="M4 0.5 H10 L12.5 3 V13.5 H4 Z" fill="#fff" stroke="#c8c8c8" stroke-width="0.7"/><path d="M6.5 5 H11 M6.5 7 H11 M6.5 9 H11" stroke="#d0482a" stroke-width="0.6" opacity="0.6"/><rect x="0.5" y="3.5" width="7" height="7" rx="0.8" fill="#d0482a"/><text x="4" y="9" font-family="Liberation Sans" font-size="5.5" font-weight="bold" fill="#cfe0f8" text-anchor="middle">P</text></svg>
<svg class="a" style="left:202px;top:326.5px" width="8" height="8" viewBox="0 0 8 8"><circle cx="4" cy="4" r="3.4" fill="none" stroke="#4f9e6c" stroke-width="0.8"/><path d="M2.3 4.1 L3.5 5.2 L5.8 2.9" fill="none" stroke="#4f9e6c" stroke-width="0.8"/></svg>
<div class="t" style="left:233px;top:326px;color:#2a2a2a">Batman Presentation</div>
<div class="t g d" style="left:403px;top:326px;color:#3e3e3e">6/7/2022 2:49 PM</div>
<div class="t g" style="left:516px;top:326px">Brandon - Personal\Documents</div>
<svg class="a" style="left:212px;top:344px" width="14" height="11" viewBox="0 0 14 11"><rect width="14" height="11" fill="#c86a58"/><path d="M0 0 H6 L3 5 L0 6 Z" fill="#eab09a"/><path d="M4 11 C4 6 6 3 8 3 C11 3 12 7 12 11 Z" fill="#8a2230"/><circle cx="8" cy="3.5" r="2" fill="#5a1a1a"/></svg>
<svg class="a" style="left:202px;top:345.5px" width="8" height="8" viewBox="0 0 8 8"><circle cx="4" cy="4" r="3.4" fill="none" stroke="#4f9e6c" stroke-width="0.8"/><path d="M2.3 4.1 L3.5 5.2 L5.8 2.9" fill="none" stroke="#4f9e6c" stroke-width="0.8"/></svg>
<div class="t" style="left:233px;top:345px;color:#2a2a2a">Uhura</div>
<div class="t g d" style="left:403px;top:345px;color:#3e3e3e">6/7/2022 2:45 PM</div>
<div class="t g" style="left:516px;top:345px">Brandon - Personal\Pictures\Star Trek Filez</div>
<svg class="a" style="left:212px;top:364px" width="14" height="11" viewBox="0 0 14 11"><rect width="14" height="11" fill="#1c1420"/><path d="M5 11 C5 6 6 4 7.5 4 C9 4 10 6 10 11 Z" fill="#3a50a8"/><circle cx="7.5" cy="3" r="1.6" fill="#6a5040"/><rect x="1" y="2" width="2" height="5" fill="#5a3a20" opacity="0.7"/></svg>
<svg class="a" style="left:202px;top:365.5px" width="8" height="8" viewBox="0 0 8 8"><circle cx="4" cy="4" r="3.4" fill="none" stroke="#4f9e6c" stroke-width="0.8"/><path d="M2.3 4.1 L3.5 5.2 L5.8 2.9" fill="none" stroke="#4f9e6c" stroke-width="0.8"/></svg>
<div class="t" style="left:233px;top:365px;color:#2a2a2a">Spock</div>
<div class="t g d" style="left:403px;top:365px;color:#3e3e3e">6/7/2022 2:44 PM</div>
<div class="t g" style="left:516px;top:365px">Brandon - Personal\Pictures\Star Trek Filez</div>
<svg class="a" style="left:212px;top:383px" width="14" height="11" viewBox="0 0 14 11"><rect width="14" height="11" fill="#2a1a14"/><path d="M4 11 C4 6 6 4 7.5 4 C9 4 11 6 11 11 Z" fill="#a87830"/><circle cx="7.5" cy="3.2" r="1.8" fill="#c09050"/></svg>
<svg class="a" style="left:202px;top:384.5px" width="8" height="8" viewBox="0 0 8 8"><circle cx="4" cy="4" r="3.4" fill="none" stroke="#4f9e6c" stroke-width="0.8"/><path d="M2.3 4.1 L3.5 5.2 L5.8 2.9" fill="none" stroke="#4f9e6c" stroke-width="0.8"/></svg>
<div class="t" style="left:233px;top:384px;color:#2a2a2a">Captain Pike</div>
<div class="t g d" style="left:403px;top:384px;color:#3e3e3e">6/7/2022 2:44 PM</div>
<div class="t g" style="left:516px;top:384px">Brandon - Personal\Pictures\Star Trek Filez</div>
<svg class="a" style="left:213px;top:401px" width="13" height="14" viewBox="0 0 13 14"><path d="M4 0.5 H10 L12.5 3 V13.5 H4 Z" fill="#fff" stroke="#c8c8c8" stroke-width="0.7"/><path d="M6.5 5 H11 M6.5 7 H11 M6.5 9 H11" stroke="#2b5fc4" stroke-width="0.6" opacity="0.6"/><rect x="0.5" y="3.5" width="7" height="7" rx="0.8" fill="#2b5fc4"/><text x="4" y="9" font-family="Liberation Sans" font-size="5.5" font-weight="bold" fill="#cfe0f8" text-anchor="middle">W</text></svg>
<svg class="a" style="left:202px;top:403.5px" width="8" height="8" viewBox="0 0 8 8"><circle cx="4" cy="4" r="3.4" fill="none" stroke="#4f9e6c" stroke-width="0.8"/><path d="M2.3 4.1 L3.5 5.2 L5.8 2.9" fill="none" stroke="#4f9e6c" stroke-width="0.8"/></svg>
<div class="t" style="left:233px;top:403px;color:#2a2a2a">Brandon's Star Trek Script</div>
<div class="t g d" style="left:403px;top:403px;color:#3e3e3e">4/5/2022 12:39 PM</div>
<div class="t g" style="left:516px;top:403px">Brandon LeBlanc's OneDrive</div>
<svg class="a" style="left:213px;top:421px" width="13" height="14" viewBox="0 0 13 14"><path d="M4 0.5 H10 L12.5 3 V13.5 H4 Z" fill="#fff" stroke="#c8c8c8" stroke-width="0.7"/><path d="M6.5 5 H11 M6.5 7 H11 M6.5 9 H11" stroke="#2b5fc4" stroke-width="0.6" opacity="0.6"/><rect x="0.5" y="3.5" width="7" height="7" rx="0.8" fill="#2b5fc4"/><text x="4" y="9" font-family="Liberation Sans" font-size="5.5" font-weight="bold" fill="#cfe0f8" text-anchor="middle">W</text></svg>
<svg class="a" style="left:201px;top:424px" width="9" height="7" viewBox="0 0 9 7"><path d="M2.2 6.3 A1.8 1.8 0 0 1 1.8 2.8 A2.6 2.6 0 0 1 6.6 2.4 A2 2 0 0 1 7.2 6.3 Z" fill="none" stroke="#7aa6d4" stroke-width="0.8"/></svg>
<div class="t" style="left:233px;top:423px;color:#2a2a2a">First Windows 11 Flight Blog Post</div>
<div class="t g d" style="left:403px;top:423px;color:#3e3e3e">6/24/2021 8:17 PM</div>
<div class="t g" style="left:516px;top:423px">Brandon LeBlanc's OneDrive</div>

<!-- status bar -->
<div class="t" style="left:39px;top:475px;color:#444">15 items</div>
<svg class="a" style="left:767px;top:474px" width="8" height="8" viewBox="0 0 8 8"><rect x="0" y="0.8" width="8" height="2.4" rx="0.5" fill="#a0a0a0"/><rect x="0" y="4.6" width="8" height="2.4" rx="0.5" fill="#a0a0a0"/></svg>
<svg class="a" style="left:780.4px;top:474.6px" width="8" height="8" viewBox="0 0 8 8"><rect x="0.5" y="0.5" width="7" height="6.6" rx="1" fill="none" stroke="#8a8a8a" stroke-width="0.9"/><path d="M0.8 6.6 H7.2" stroke="#8a8a8a" stroke-width="1.3"/></svg>
</body></html>
